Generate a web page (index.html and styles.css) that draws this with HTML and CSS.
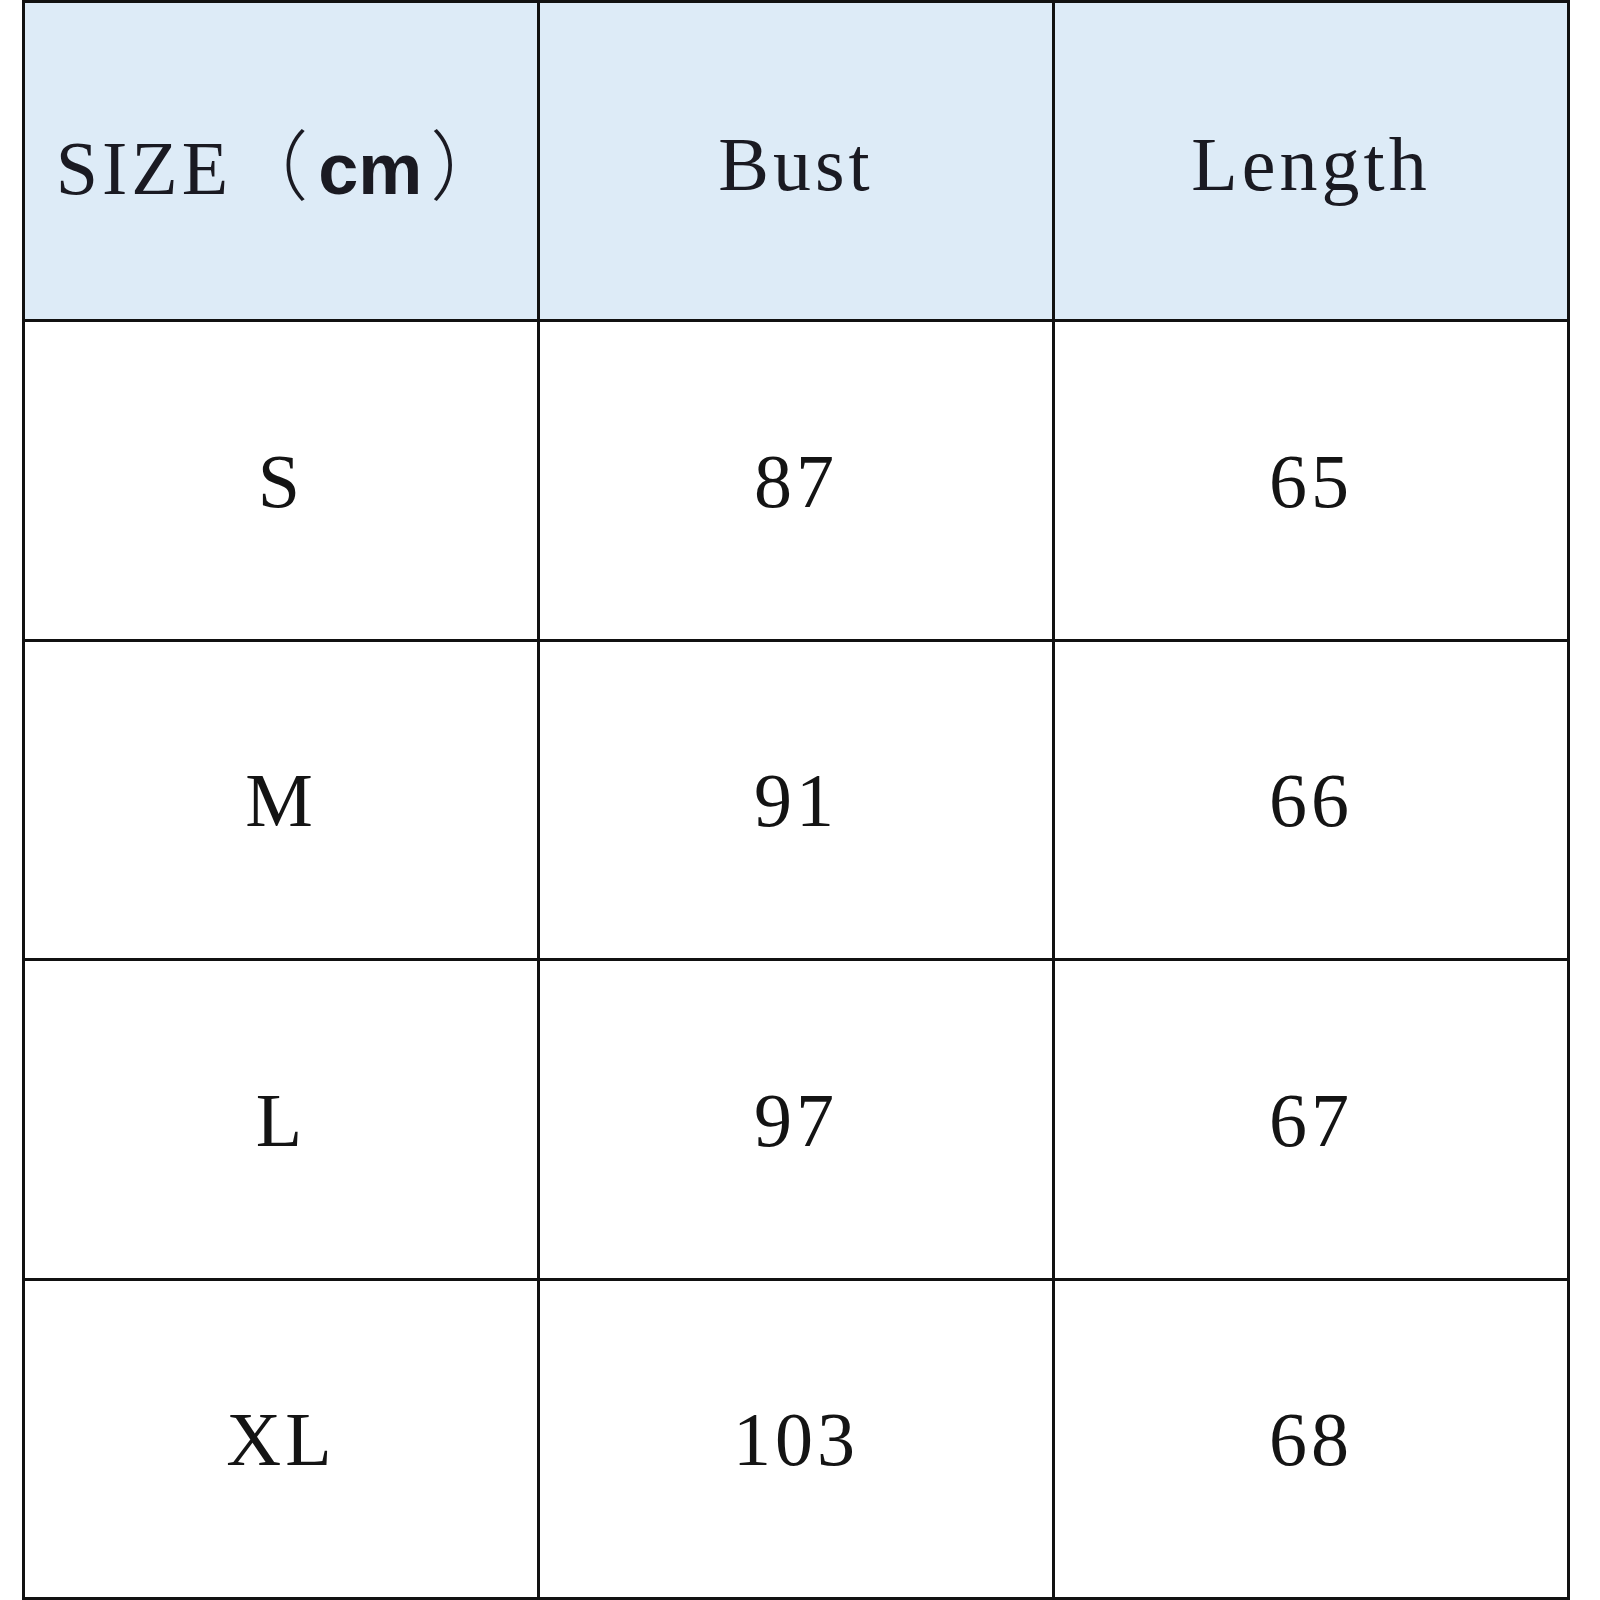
FILE: index.html
```html
<!DOCTYPE html>
<html>
<head>
<meta charset="utf-8">
<link rel="stylesheet" href="styles.css">
</head>
<body>
<table class="size-table">
  <thead>
    <tr class="head-row">
      <th class="cell head">SIZE<span class="paren">（</span><span class="unit">cm</span><span class="paren">）</span></th>
      <th class="cell head">Bust</th>
      <th class="cell head">Length</th>
    </tr>
  </thead>
  <tbody>
    <tr class="row"><td class="cell">S</td><td class="cell">87</td><td class="cell">65</td></tr>
    <tr class="row"><td class="cell">M</td><td class="cell">91</td><td class="cell">66</td></tr>
    <tr class="row"><td class="cell">L</td><td class="cell">97</td><td class="cell">67</td></tr>
    <tr class="row"><td class="cell">XL</td><td class="cell">103</td><td class="cell">68</td></tr>
  </tbody>
</table>
</body>
</html>
```
FILE: styles.css
```css
html, body {
  margin: 0;
  padding: 0;
  background: #ffffff;
}

.size-table {
  margin-left: 22px;
  border-collapse: collapse;
  table-layout: fixed;
  width: 1548px;
}

.cell {
  border: 3px solid #111111;
  height: 316px;
  padding: 0;
  text-align: center;
  vertical-align: middle;
  font-family: "Liberation Serif", "Times New Roman", serif;
  font-size: 76px;
  font-weight: normal;
  letter-spacing: 4px;
  color: #141414;
  line-height: 1;
}

.row:nth-child(odd) .cell {
  height: 317px;
}

.head {
  background: #ddebf7;
  color: #1a1a22;
  padding-top: 6px;
  height: 310px;
}

.paren {
  font-family: "Noto Sans CJK SC", sans-serif;
  font-weight: 300;
  letter-spacing: 0;
}

.unit {
  font-family: "Liberation Sans", Arial, sans-serif;
  font-weight: bold;
  font-size: 72px;
  letter-spacing: 0;
  margin: 0 8px 0 10px;
}
```
